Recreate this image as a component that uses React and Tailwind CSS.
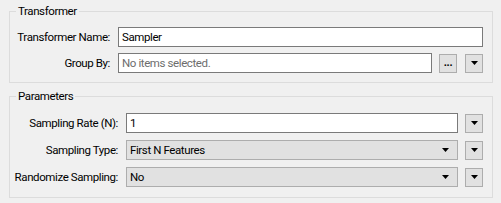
import React from 'react';

function Arrow() {
  return (
    <svg width="7" height="4" viewBox="0 0 7 4" className="block">
      <path d="M0 0H7L3.5 4Z" fill="#000" />
    </svg>
  );
}

function MenuButton() {
  return (
    <button className="w-[18px] h-[19px] flex items-center justify-center bg-[#e1e1e1] border border-[#adadad] shrink-0">
      <Arrow />
    </button>
  );
}

function TextBox({ value, placeholder }) {
  return (
    <div className="flex-1 h-[20px] bg-white border border-[#7a7a7a] flex items-center px-[3px] min-w-0">
      {value ? (
        <span className="text-black">{value}</span>
      ) : (
        <span className="text-[#6d6d6d]">{placeholder}</span>
      )}
    </div>
  );
}

function Choice({ value }) {
  return (
    <div className="flex-1 h-[20px] bg-[#e1e1e1] border border-[#adadad] flex items-center justify-between pl-[3px] pr-[8px] min-w-0">
      <span className="text-black">{value}</span>
      <Arrow />
    </div>
  );
}

function Row({ label, labelWidth, children }) {
  return (
    <div className="flex items-center">
      <label className={`${labelWidth} shrink-0 text-right pr-[8px] text-black whitespace-nowrap`}>{label}</label>
      {children}
    </div>
  );
}

export default function App() {
  return (
    <div className="w-[501px] h-[203px] bg-[#f0f0f0] pl-[9px] pr-[8px] text-[11.5px] tracking-[-0.4px] leading-[14px] font-['Roboto',sans-serif] overflow-hidden">
      <fieldset className="border border-[#dcdcdc] pl-0 pr-[9px] pt-[5px] pb-[9px]">
        <legend className="ml-[6px] px-[2px] leading-[22px] text-black">Transformer</legend>
        <div className="flex flex-col gap-[6px]">
          <Row label="Transformer Name:" labelWidth="w-[108px]">
            <TextBox value="Sampler" />
          </Row>
          <Row label="Group By:" labelWidth="w-[108px]">
            <TextBox placeholder="No items selected." />
            <button className="ml-[7px] w-[18px] h-[19px] flex items-end justify-center pb-[5px] bg-[#e1e1e1] border border-[#adadad] shrink-0 text-[11px] leading-[8px] font-bold">
              ...
            </button>
            <div className="ml-[8px]">
              <MenuButton />
            </div>
          </Row>
        </div>
      </fieldset>
      <fieldset className="mt-[2px] border border-[#dcdcdc] pl-0 pr-[9px] pt-[6px] pb-[10px]">
        <legend className="ml-[6px] px-[2px] leading-[22px] text-black">Parameters</legend>
        <div className="flex flex-col gap-[7px]">
          <Row label="Sampling Rate (N):" labelWidth="w-[116px]">
            <TextBox value="1" />
            <div className="ml-[7px]">
              <MenuButton />
            </div>
          </Row>
          <Row label="Sampling Type:" labelWidth="w-[116px]">
            <Choice value="First N Features" />
            <div className="ml-[7px]">
              <MenuButton />
            </div>
          </Row>
          <Row label="Randomize Sampling:" labelWidth="w-[116px]">
            <Choice value="No" />
            <div className="ml-[7px]">
              <MenuButton />
            </div>
          </Row>
        </div>
      </fieldset>
    </div>
  );
}
